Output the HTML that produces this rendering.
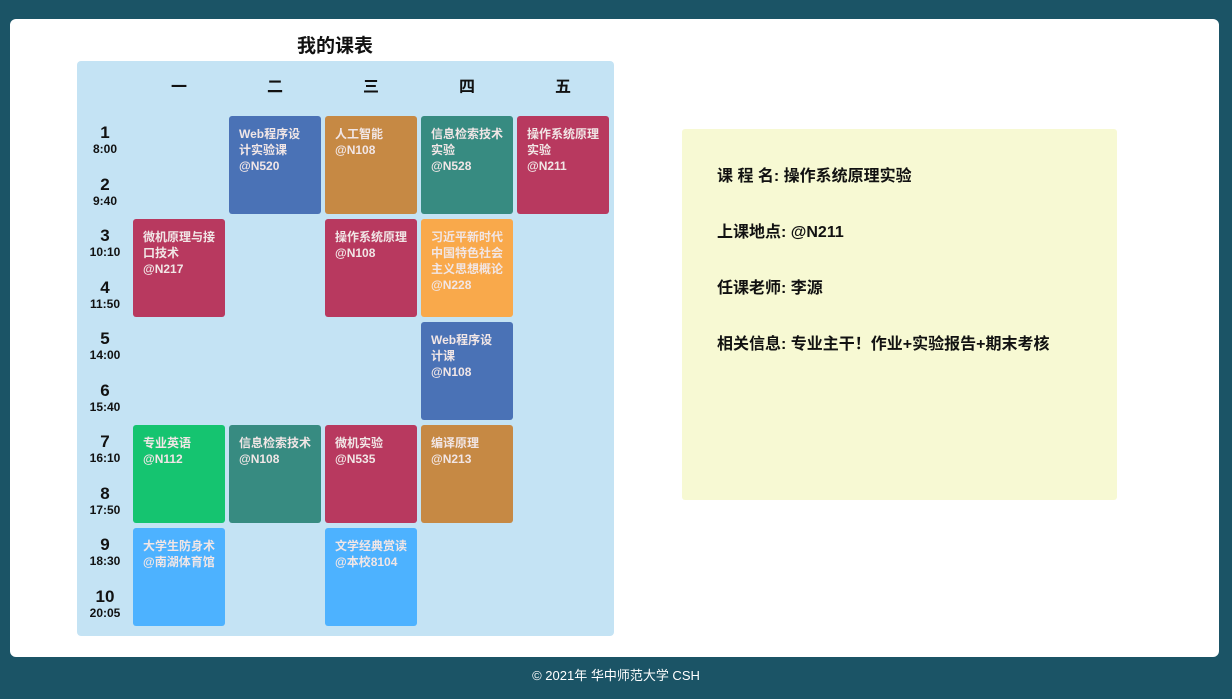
<!DOCTYPE html>
<html><head><meta charset="utf-8"><style>
*{margin:0;padding:0;box-sizing:border-box}
body{width:1232px;height:699px;background:#1b5466;position:relative;overflow:hidden;font-family:"Liberation Sans","Noto Sans CJK SC",sans-serif;font-weight:bold}
.card{position:absolute;left:10px;top:19px;width:1209px;height:638px;background:#fff;border-radius:6px}
.title{position:absolute;left:235px;width:200px;top:31px;text-align:center;font-size:19px;color:#111}
.panel{position:absolute;left:77px;top:61px;width:537px;height:575px;background:#c4e3f4;border-radius:4px}
.day{position:absolute;top:73px;width:92px;text-align:center;font-size:16px;color:#111}
.c{position:absolute;width:92px;height:98px;border-radius:3px;color:#f1e6e6;font-size:12px;line-height:16px;padding:10px 6px 0 10px}
.n{position:absolute;left:80px;width:50px;text-align:center;color:#111}
.n b{display:block;font-size:17px;line-height:18px}
.n i{display:block;font-style:normal;font-size:12px;line-height:14px}
.info{position:absolute;left:682px;top:129px;width:435px;height:371px;background:#f7f9d3;border-radius:3px}
.info p{position:absolute;left:35px;font-size:16px;color:#111;white-space:nowrap}
.foot{position:absolute;left:0;width:1232px;top:665px;text-align:center;color:#fff;font-size:13px;font-weight:normal}
</style></head><body>
<div class="card"></div>
<div class="title">我的课表</div>
<div class="panel"></div>
<div class="day" style="left:133px">一</div>
<div class="day" style="left:229px">二</div>
<div class="day" style="left:325px">三</div>
<div class="day" style="left:421px">四</div>
<div class="day" style="left:517px">五</div>

<div class="n" style="top:124px"><b>1</b><i>8:00</i></div>
<div class="n" style="top:176px"><b>2</b><i>9:40</i></div>
<div class="n" style="top:227px"><b>3</b><i>10:10</i></div>
<div class="n" style="top:279px"><b>4</b><i>11:50</i></div>
<div class="n" style="top:330px"><b>5</b><i>14:00</i></div>
<div class="n" style="top:382px"><b>6</b><i>15:40</i></div>
<div class="n" style="top:433px"><b>7</b><i>16:10</i></div>
<div class="n" style="top:485px"><b>8</b><i>17:50</i></div>
<div class="n" style="top:536px"><b>9</b><i>18:30</i></div>
<div class="n" style="top:588px"><b>10</b><i>20:05</i></div>

<div class="c" style="left:229px;top:116px;background:#4a72b6">Web程序设<br>计实验课<br>@N520</div>
<div class="c" style="left:325px;top:116px;background:#c68944">人工智能<br>@N108</div>
<div class="c" style="left:421px;top:116px;background:#378b81">信息检索技术<br>实验<br>@N528</div>
<div class="c" style="left:517px;top:116px;background:#b8395f">操作系统原理<br>实验<br>@N211</div>

<div class="c" style="left:133px;top:219px;background:#b8395f">微机原理与接<br>口技术<br>@N217</div>
<div class="c" style="left:325px;top:219px;background:#b8395f">操作系统原理<br>@N108</div>
<div class="c" style="left:421px;top:219px;background:#f9a94b">习近平新时代<br>中国特色社会<br>主义思想概论<br>@N228</div>

<div class="c" style="left:421px;top:322px;background:#4a72b6">Web程序设<br>计课<br>@N108</div>

<div class="c" style="left:133px;top:425px;background:#15c470">专业英语<br>@N112</div>
<div class="c" style="left:229px;top:425px;background:#378b81">信息检索技术<br>@N108</div>
<div class="c" style="left:325px;top:425px;background:#b8395f">微机实验<br>@N535</div>
<div class="c" style="left:421px;top:425px;background:#c68944">编译原理<br>@N213</div>

<div class="c" style="left:133px;top:528px;background:#4db2ff">大学生防身术<br>@南湖体育馆</div>
<div class="c" style="left:325px;top:528px;background:#4db2ff">文学经典赏读<br>@本校8104</div>

<div class="info">
<p style="top:33px">课 程 名: 操作系统原理实验</p>
<p style="top:89px">上课地点: @N211</p>
<p style="top:145px">任课老师: 李源</p>
<p style="top:201px">相关信息: 专业主干！作业+实验报告+期末考核</p>
</div>
<div class="foot">© 2021年 华中师范大学 CSH</div>
</body></html>
